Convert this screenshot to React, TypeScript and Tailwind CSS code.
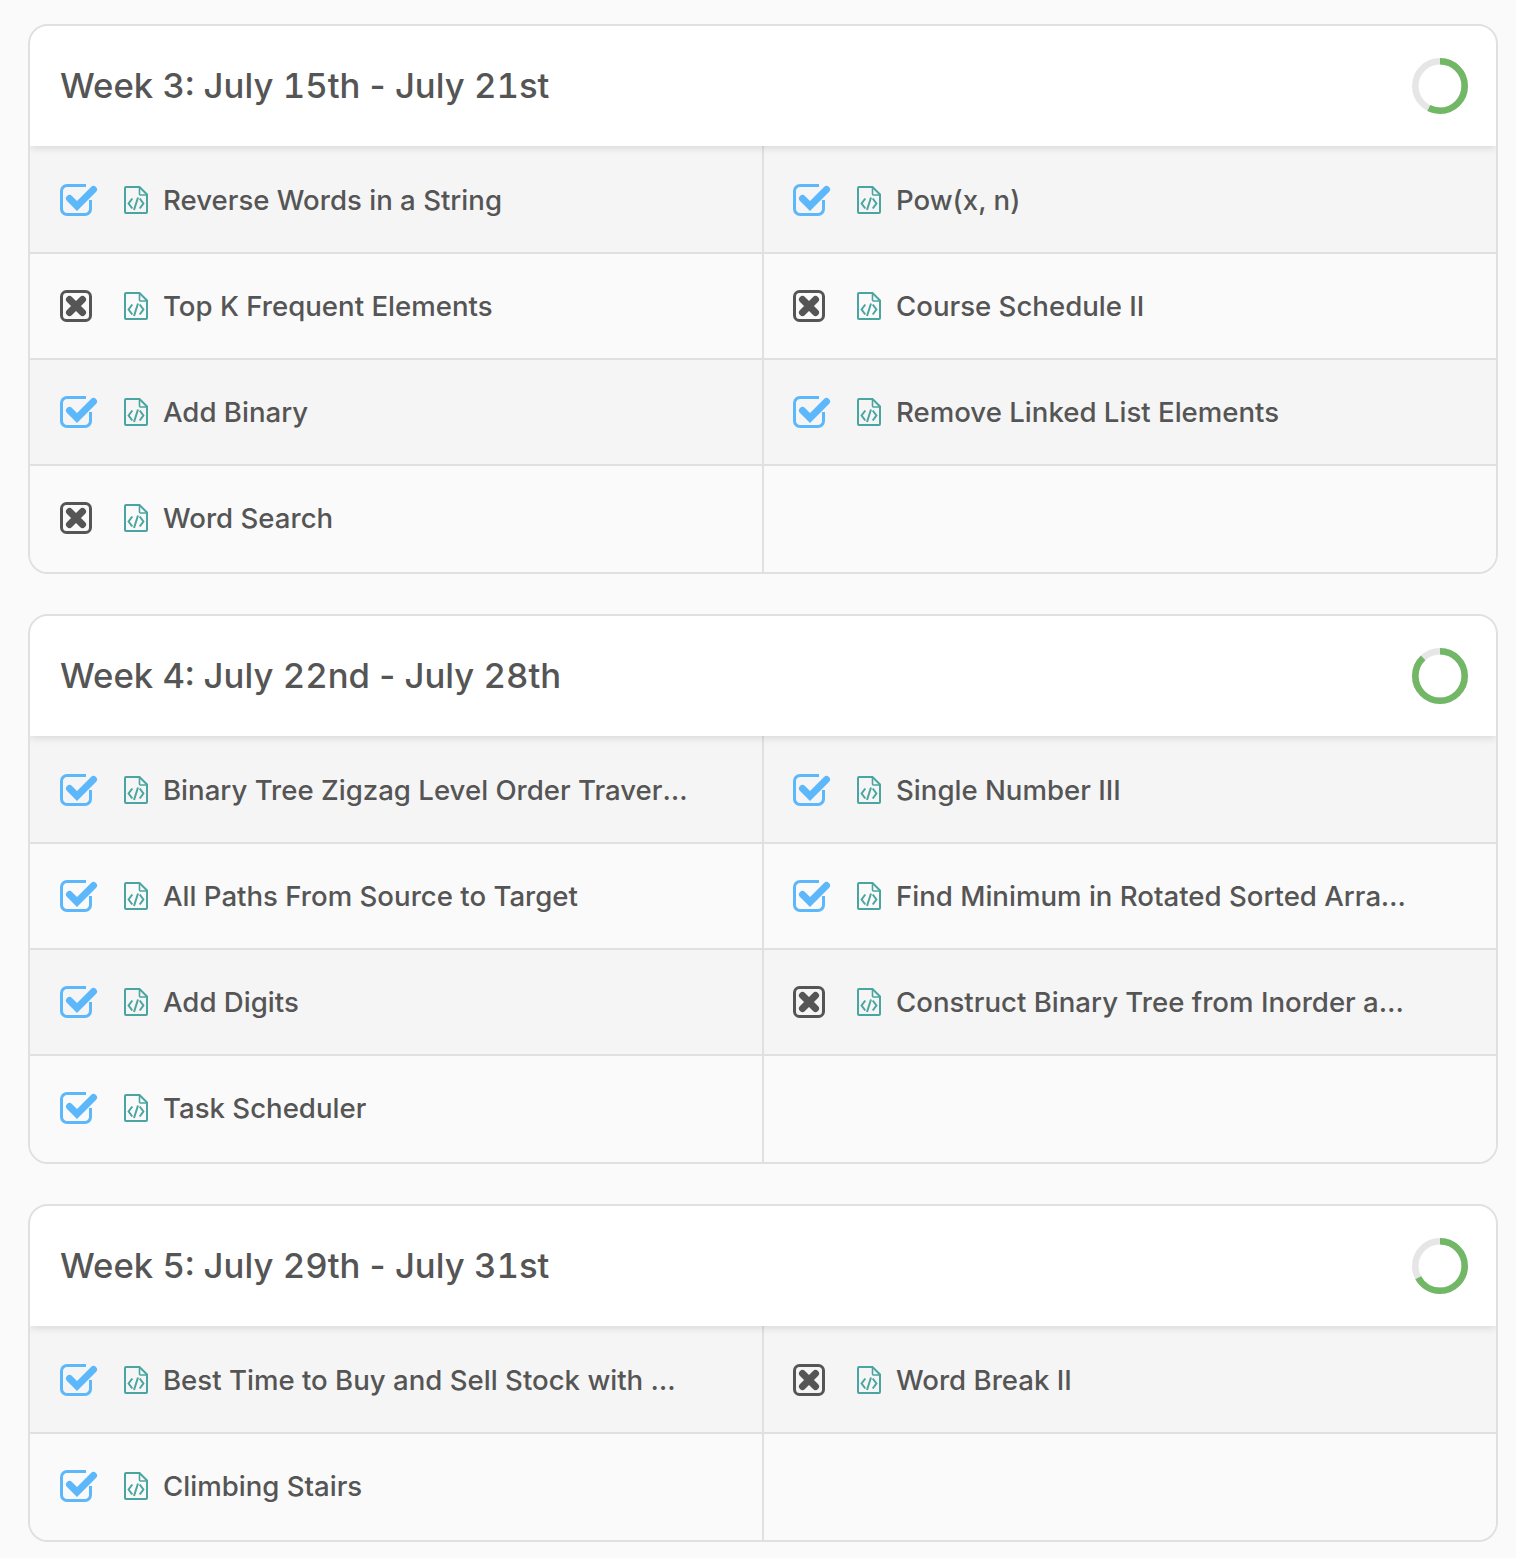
import React from "react";

type Item = { name: string; done: boolean };
type Week = { from: string; to: string; pct: number; items: Item[] };

const weeks: Week[] = [
  {
    from: "Week 3: July 15th",
    to: "July 21st",
    pct: 4 / 7,
    items: [
      { name: "Reverse Words in a String", done: true },
      { name: "Pow(x, n)", done: true },
      { name: "Top K Frequent Elements", done: false },
      { name: "Course Schedule II", done: false },
      { name: "Add Binary", done: true },
      { name: "Remove Linked List Elements", done: true },
      { name: "Word Search", done: false },
    ],
  },
  {
    from: "Week 4: July 22nd",
    to: "July 28th",
    pct: 7 / 8,
    items: [
      { name: "Binary Tree Zigzag Level Order Traversal", done: true },
      { name: "Single Number III", done: true },
      { name: "All Paths From Source to Target", done: true },
      { name: "Find Minimum in Rotated Sorted Array II", done: true },
      { name: "Add Digits", done: true },
      { name: "Construct Binary Tree from Inorder and Postorder Traversal", done: false },
      { name: "Task Scheduler", done: true },
    ],
  },
  {
    from: "Week 5: July 29th",
    to: "July 31st",
    pct: 2 / 3,
    items: [
      { name: "Best Time to Buy and Sell Stock with Cooldown", done: true },
      { name: "Word Break II", done: false },
      { name: "Climbing Stairs", done: true },
    ],
  },
];

function CheckIcon() {
  return (
    <svg width="38" height="34" viewBox="0 0 38 34" className="block shrink-0">
      <path
        d="M26 2.5H7A5.5 5.5 0 0 0 1.5 8v18A5.5 5.5 0 0 0 7 31.5h18a5.5 5.5 0 0 0 5.5-5.5V17"
        fill="none"
        stroke="#5db7fb"
        strokeWidth="3"
      />
      <path
        d="M9.5 15.5L17 23L33.5 6.5"
        fill="none"
        stroke="#5db7fb"
        strokeWidth="7"
        strokeLinecap="round"
        strokeLinejoin="miter"
      />
    </svg>
  );
}

function CrossIcon() {
  return (
    <svg width="38" height="34" viewBox="0 0 38 34" className="block shrink-0">
      <rect x="1.5" y="2.5" width="29" height="29" rx="5" fill="none" stroke="#555555" strokeWidth="3" />
      <path d="M9.5 10.5L22.5 23.5M22.5 10.5L9.5 23.5" fill="none" stroke="#555555" strokeWidth="7" strokeLinecap="round" />
    </svg>
  );
}

function FileIcon() {
  return (
    <svg width="24" height="28" viewBox="0 0 24 28" fill="none" stroke="#4aa5a0" className="block shrink-0">
      <path d="M15.5 1H2a1 1 0 0 0-1 1v24a1 1 0 0 0 1 1h20a1 1 0 0 0 1-1V8.5z" strokeWidth="2" />
      <path d="M15.5 1v7a1 1 0 0 0 1 1H23" strokeWidth="1.6" />
      <path d="M8.3 12.5L4.6 17.5l3.7 5M15.7 12.5l3.7 5-3.7 5M14 11.5L10 24" strokeWidth="2" />
    </svg>
  );
}

function Ring({ pct }: { pct: number }) {
  const r = 24.7;
  const c = 2 * Math.PI * r;
  return (
    <svg width="56" height="56" viewBox="0 0 56 56" className="block shrink-0 -rotate-90">
      <circle cx="28" cy="28" r={r} fill="none" stroke="#e6e6e6" strokeWidth="6.6" />
      <circle
        cx="28"
        cy="28"
        r={r}
        fill="none"
        stroke="#71b765"
        strokeWidth="6.6"
        strokeDasharray={`${c * pct} ${c}`}
      />
    </svg>
  );
}

function Cell({ item, index, rows }: { item?: Item; index: number; rows: number }) {
  const row = Math.floor(index / 2);
  const left = index % 2 === 0;
  const last = row === rows - 1;
  return (
    <div
      className={`flex items-center border-[#e0e0e0] ${row === 0 ? "h-[108px] pt-[2px]" : "h-[106px]"} ${
        left ? "border-r-2 pl-[30px]" : "pl-[29px]"
      } ${last ? "pb-[2px]" : "border-b-2"} ${item && row % 2 === 0 ? "bg-[#f5f5f5]" : "bg-[#fafafa]"}`}
    >
      {item && (
        <>
          {item.done ? <CheckIcon /> : <CrossIcon />}
          <div className="ml-[26px] mr-[15px]">
            <FileIcon />
          </div>
          <span
            className={`truncate text-[27.6px] font-[450] leading-[40px] text-[#555555] ${
              left ? "max-w-[526px]" : "max-w-[516px]"
            }`}
          >
            {item.name}
          </span>
        </>
      )}
    </div>
  );
}

function WeekCard({ week }: { week: Week }) {
  const rows = Math.ceil(week.items.length / 2);
  const cells: (Item | undefined)[] = [...week.items];
  if (cells.length % 2) cells.push(undefined);
  return (
    <section className="overflow-hidden rounded-[20px] border-2 border-[#e0e0e0] bg-[#fafafa]">
      <header className="relative flex h-[120px] items-center justify-between bg-white pl-[30px] pr-[28px] shadow-[0_2px_8px_rgba(0,0,0,0.12)]">
        <h2 className="pb-[3px] text-[34.7px] font-medium leading-[48px] text-[#555555]">
          <span className="tabular-nums">{week.from}</span> - <span className="tabular-nums">{week.to}</span>
        </h2>
        <Ring pct={week.pct} />
      </header>
      <div className="grid grid-cols-[734px_1fr]">
        {cells.map((item, i) => (
          <Cell key={i} item={item} index={i} rows={rows} />
        ))}
      </div>
    </section>
  );
}

export default function App() {
  return (
    <div
      className="flex min-h-[1558px] flex-col gap-[40px] bg-[#fafafa] pb-[16px] pl-[28px] pr-[18px] pt-[24px]"
      style={{ fontFamily: "Inter, 'Noto Sans', sans-serif" }}
    >
      {weeks.map((w) => (
        <WeekCard key={w.from} week={w} />
      ))}
    </div>
  );
}
